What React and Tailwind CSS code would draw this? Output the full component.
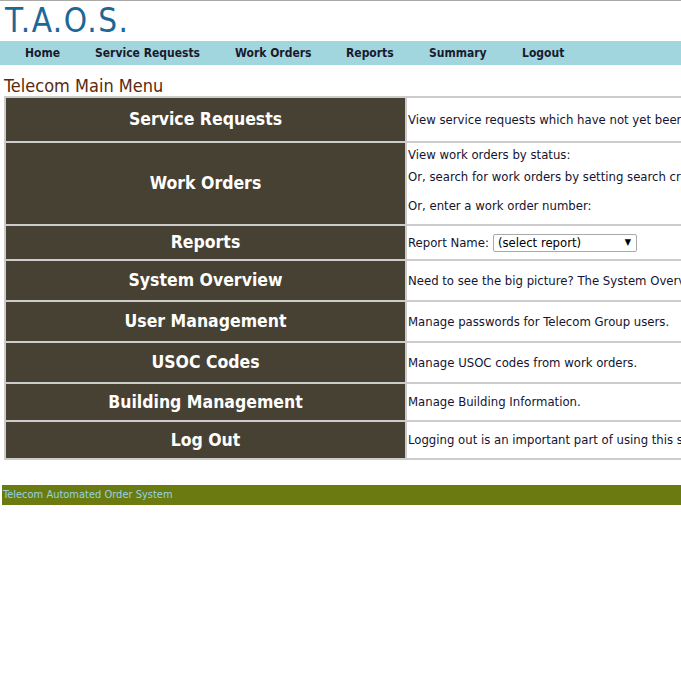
import React from 'react';

const rows = [
  { title: 'Service Requests', h: 'h-[43px]', body: <span>View service requests which have not yet been assigned to a work order.</span> },
  {
    title: 'Work Orders',
    h: 'h-[81px]',
    body: (
      <div className="flex flex-col pb-[6px]">
        <span className="leading-[16px]">View work orders by status:</span>
        <span className="mt-[6px] leading-[16px]">Or, search for work orders by setting search criteria:</span>
        <span className="mt-[13px] leading-[16px]">Or, enter a work order number:</span>
      </div>
    ),
  },
  {
    title: 'Reports',
    h: 'h-[33px]',
    body: (
      <div className="flex items-center gap-[4px]">
        <span>Report Name:</span>
        <div className="flex items-center justify-between w-[144px] h-[18px] border border-[#a9a9a9] rounded-[2px] pl-[4px] pr-[5px] bg-white text-black">
          <span>(select report)</span>
          <span className="text-[9px]">▼</span>
        </div>
      </div>
    ),
  },
  { title: 'System Overview', h: 'h-[39px]', body: <span>Need to see the big picture? The System Overview shows all open work orders.</span> },
  { title: 'User Management', h: 'h-[39px]', body: <span>Manage passwords for Telecom Group users.</span> },
  { title: 'USOC Codes', h: 'h-[39px]', body: <span>Manage USOC codes from work orders.</span> },
  { title: 'Building Management', h: 'h-[36px]', body: <span>Manage Building Information.</span> },
  { title: 'Log Out', h: 'h-[36px]', body: <span>Logging out is an important part of using this system securely.</span> },
];

const App = () => {
  return (
    <div className="w-[681px] h-[681px] overflow-hidden bg-white font-['DejaVu_Sans_Condensed','DejaVu_Sans',sans-serif]">
      <div className="border-t border-[#aaaaaa]">
        <h1 className="h-[40px] pl-[5px] pt-[1px] text-[33px] leading-[38px] tracking-[1.5px] text-[#1d6796]">T.A.O.S.</h1>
        <nav className="h-[24px] bg-[#a2d6df] flex items-center pl-[25px] text-[12px] font-bold text-[#1a1a2e]">
          <span className="w-[70px]">Home</span>
          <span className="w-[140px]">Service Requests</span>
          <span className="w-[111px]">Work Orders</span>
          <span className="w-[83px]">Reports</span>
          <span className="w-[93px]">Summary</span>
          <span>Logout</span>
        </nav>
        <h2 className="pl-[4px] pt-[11px] text-[18px] leading-[20px] text-[#5a2a0e]">Telecom Main Menu</h2>
        <div className="ml-[4px] w-[900px] bg-[#cccccc] p-[2px]">
          <div className="flex flex-col gap-[2px]">
            {rows.map((row) => (
              <div key={row.title} className={`flex gap-[2px] ${row.h}`}>
                <div className="w-[399px] shrink-0 bg-[#474133] flex items-center justify-center text-white font-bold text-[17.5px]">
                  {row.title}
                </div>
                <div className="flex-1 bg-white flex items-center pl-[1px] text-[13px] text-[#141430] whitespace-nowrap">
                  {row.body}
                </div>
              </div>
            ))}
          </div>
        </div>
        <div className="mt-[25px] ml-[2px] h-[20px] bg-[#6b7b10] flex items-center pl-[1px] text-[11px] text-[#93d3e6]">
          Telecom Automated Order System
        </div>
      </div>
    </div>
  );
};

export default App;
